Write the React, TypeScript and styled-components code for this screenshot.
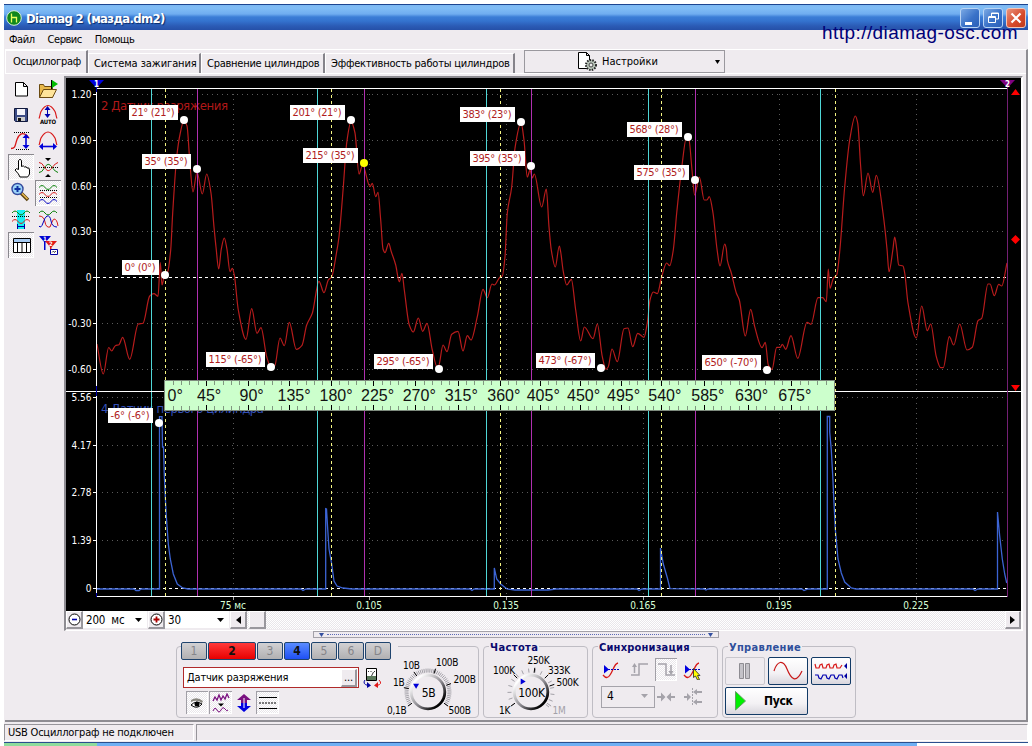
import React from 'react';
import styled, { createGlobalStyle, css } from 'styled-components';

const GlobalStyle = createGlobalStyle`
  * { box-sizing: border-box; }
  body {
    margin: 0;
    background: #fff;
    font-family: 'DejaVu Sans Condensed', 'DejaVu Sans', sans-serif;
    font-size: 11px;
    color: #000;
    overflow: hidden;
  }
  svg { display: block; flex: none; }
`;

const face = '#efebef';
const hatch = css`
  background: repeating-conic-gradient(#fff 0 25%, #e9e6ea 0 50%) 0 0 / 2px 2px;
`;

const Desktop = styled.div`
  width: 1032px;
  height: 746px;
  padding: 4px 4px 0;
`;
const Window = styled.div`
  position: relative;
  width: 1024px;
  height: 738px;
  display: flex;
  flex-direction: column;
  background: ${face};
`;
const TitleBar = styled.div`
  height: 26px;
  display: flex;
  align-items: center;
  padding: 0 2px;
  border-top: 1px solid #1d4590;
  background: linear-gradient(#7db8f2 0, #81bdf5 3px, #6fadf0 9px, #3b7dd6 12px, #3473cf 16px, #2b5bb5 21px, #2550a8 25px);
`;
const Title = styled.div`
  flex: 1;
  margin-left: 4px;
  padding-top: 1px;
  color: #fff;
  font-size: 13px;
  font-weight: bold;
  letter-spacing: -0.65px;
  text-shadow: 1px 1px 1px #0a2a6a;
`;
const WinButton = styled.div<{ $close?: boolean }>`
  width: 20px;
  height: 20px;
  margin-left: 3px;
  border: 1px solid ${p => (p.$close ? '#f3c5b8' : '#b9d4f4')};
  border-radius: 3px;
  background: ${p => (p.$close ? 'linear-gradient(135deg, #e9937c, #d6492a 60%, #c03b1c)' : 'linear-gradient(135deg, #7aa9e4, #3a72c8 55%, #2b5fb8)')};
`;
const Watermark = styled.div`
  position: absolute;
  right: 10px;
  top: 18px;
  font: 19px/22px 'Liberation Sans', Arial, sans-serif;
  letter-spacing: 0.43px;
  color: #000078;
  white-space: nowrap;
`;
const MenuBar = styled.div`
  height: 19px;
  display: flex;
  align-items: center;
  gap: 13px;
  padding-left: 5px;
  span { letter-spacing: -0.45px; }
`;
const Page = styled.div`
  height: 673px;
  margin-left: 1px;
  border-top: 1px solid #fff;
  border-right: 2px solid #8e8c92;
  border-bottom: 2px solid #8e8c92;
`;
const TabRow = styled.div`
  height: 24px;
  display: flex;
  align-items: flex-end;
  border-bottom: 1px solid #fff;
`;
const Tab = styled.div<{ $width: number; $track: number; $active?: boolean }>`
  width: ${p => p.$width}px;
  height: ${p => (p.$active ? 23 : 20)}px;
  padding-left: ${p => (p.$active ? 7 : 5)}px;
  line-height: ${p => (p.$active ? 21 : 20)}px;
  white-space: nowrap;
  border-top: 1px solid #fff;
  border-left: 1px solid #fff;
  border-right: 2px solid #85838a;
  letter-spacing: ${p => p.$track}px;
`;
const SettingsButton = styled.div`
  width: 201px;
  height: 23px;
  margin-left: 9px;
  display: flex;
  align-items: center;
  border: 1px solid #9a989e;
  padding: 0 4px 0 52px;
  span { flex: 1; margin-left: 4px; }
`;
const Body = styled.div`
  display: flex;
  height: 557px;
  padding-top: 1px;
`;
const ToolBox = styled.div`
  display: grid;
  grid-template-columns: 27px 26px;
  grid-auto-rows: 26px;
  align-content: start;
  width: 59px;
  padding: 1px 0 0 3px;
`;
const Tool = styled.div<{ $on?: boolean }>`
  width: 26px;
  height: 26px;
  ${p => p.$on && css`
    ${hatch}
    box-shadow: inset 1px 1px 0 #8a888e, inset -1px -1px 0 #fff;
  `}
`;
const Scope = styled.div`
  width: 959px;
  height: 555px;
  margin-top: 1px;
  border: 2px solid #8e8c92;
  border-right-color: #fff;
  border-bottom: 1px solid #fff;
`;
const ScopeBar = styled.div`
  display: flex;
  height: 18px;
  background: ${face};
`;
const Raised = styled.div<{ $w: number }>`
  width: ${p => p.$w}px;
  height: 18px;
  display: flex;
  align-items: center;
  justify-content: center;
  background: ${face};
  border: 1px solid #fff;
  border-right: 2px solid #99979d;
  border-bottom: 2px solid #99979d;
`;
const Combo = styled.div<{ $w: number }>`
  width: ${p => p.$w}px;
  height: 17px;
  display: flex;
  align-items: center;
  justify-content: space-between;
  padding: 1px 5px 0 3px;
  margin-right: 1px;
  font-size: 11.5px;
  letter-spacing: -0.2px;
  background: #fff;
`;
const Track = styled.div<{ $w?: number }>`
  flex: ${p => (p.$w ? `0 0 ${p.$w}px` : 1)};
  ${hatch}
`;
const Splitter = styled.div`
  width: 406px;
  height: 7px;
  margin-left: 308px;
  border: 1px solid #a3a1a8;
  padding: 0 5px;
  display: flex;
  align-items: center;
  gap: 3px;
  i { flex: 1; border-top: 1px dotted #5b6bb5; }
`;
const Panels = styled.div`
  display: flex;
  gap: 4px;
  padding: 8px 0 0 171px;
`;
const Group = styled.div<{ $w: number }>`
  position: relative;
  width: ${p => p.$w}px;
  height: 72px;
  border: 1px solid #bfbdc4;
  border-radius: 4px;
`;
const Legend = styled.div<{ $color?: string; $track?: number }>`
  position: absolute;
  left: 5px;
  top: -6px;
  padding: 0 1px;
  line-height: 14px;
  font-weight: bold;
  background: ${face};
  color: ${p => p.$color || '#0a0a6e'};
  letter-spacing: ${p => p.$track || 0}px;
  white-space: nowrap;
`;
const ChannelGroup = styled(Group)`
  display: flex;
`;
const Channels = styled.div`
  display: flex;
  gap: 1px;
  width: 217px;
  margin: -5px 0 0 -2px;
  background: ${face};
`;
const Channel = styled.div<{ $bg?: string; $wide?: boolean }>`
  width: ${p => (p.$wide ? 48 : 26)}px;
  height: 18px;
  line-height: 16px;
  text-align: center;
  font-size: 12px;
  font-weight: ${p => (p.$bg ? 'bold' : 'normal')};
  color: ${p => (p.$bg ? '#111' : '#85858a')};
  border: 1px solid #1f446e;
  border-radius: 2px;
  background: ${p => p.$bg || 'linear-gradient(#d2d1d3, #b1b0b2)'};
`;
const ChannelLeft = styled.div`
  width: 206px;
  padding-left: 6px;
`;
const NameRow = styled.div`
  display: flex;
  gap: 4px;
  margin-top: 7px;
`;
const NameField = styled.div`
  width: 176px;
  height: 21px;
  display: flex;
  align-items: center;
  justify-content: space-between;
  padding: 1px 1px 1px 3px;
  border: 1px solid #b02a2a;
  background: #fff;
  letter-spacing: -0.2px;
`;
const ToolRow = styled.div`
  display: flex;
  gap: 1px;
  margin: 3px 0 0 3px;
`;
const Flat = styled.div<{ $on?: boolean; $w?: number }>`
  width: ${p => p.$w || 22}px;
  height: 23px;
  display: flex;
  align-items: center;
  justify-content: center;
  ${p => p.$on && css`
    ${hatch}
    box-shadow: inset 1px 1px 0 #a19fa6, inset -1px -1px 0 #fff;
  `}
`;
const SyncGrid = styled.div`
  display: grid;
  grid-template-columns: repeat(4, 27px);
  grid-template-rows: 25px 29px;
  padding: 10px 0 0 8px;
  align-items: center;
`;
const SyncCombo = styled.div`
  grid-column: span 2;
  width: 54px;
  height: 22px;
  display: flex;
  align-items: center;
  justify-content: space-between;
  padding: 0 6px 2px 5px;
  border: 1px solid #a5a3aa;
  font-size: 12px;
`;
const RunGrid = styled.div`
  display: grid;
  grid-template-columns: 40px 40px 40px;
  grid-template-rows: 28px 28px;
  gap: 2px 3px;
  padding: 10px 0 0 2px;
`;
const RunButton = styled.div<{ $off?: boolean; $wide?: boolean }>`
  grid-column: span ${p => (p.$wide ? 2 : 1)};
  display: flex;
  align-items: center;
  justify-content: ${p => (p.$wide ? 'flex-start' : 'center')};
  gap: 18px;
  padding-left: ${p => (p.$wide ? 9 : 0)}px;
  border: 1px solid ${p => (p.$off ? '#c9c7cd' : '#123a66')};
  border-radius: 2px;
  background: ${p => (p.$off ? face : 'linear-gradient(#fff, #f3f1f4 60%, #d9d6dd)')};
  font-size: 12px;
  font-weight: bold;
  letter-spacing: -0.3px;
`;
const StatusBar = styled.div`
  display: flex;
  gap: 2px;
  height: 20px;
  padding: 2px 0 1px;
`;
const StatusCell = styled.div<{ $w?: number }>`
  ${p => (p.$w ? `width: ${p.$w}px;` : 'flex: 1;')}
  height: 17px;
  line-height: 16px;
  letter-spacing: -0.22px;
  padding-left: 3px;
  border-top: 1px solid #96949a;
  border-left: 1px solid #96949a;
  border-right: 1px solid #fff;
  border-bottom: 1px solid #fff;
`;
const TaskStrip = styled.div`
  display: flex;
  height: 4px;
  border-top: 1px solid #2a4f8e;
`;
const TaskPart = styled.div<{ $w: number; $bg: string }>`
  width: ${p => p.$w}px;
  background: ${p => p.$bg};
`;

type Pt = [number, number];

const vacuum: Pt[] = [
  [97, 344], [103.3, 374], [108.7, 347.5], [111.7, 351], [115.3, 345.7], [119, 344.7], [122.7, 337.3], [129.7, 359.3],
  [138.3, 324], [143, 323.3], [149.7, 296], [154, 293.7], [158, 296.3], [160.3, 262.7], [162, 285], [164.5, 275],
  [167.7, 271.7], [170.7, 250], [172.7, 213], [176.7, 157], [180.3, 133], [183.7, 121], [187, 126], [189.7, 160],
  [193, 192], [197, 172], [202.3, 194], [206.7, 174], [211, 193], [214, 227], [216, 247], [218.7, 269], [221.3, 249],
  [224.3, 238], [227, 249.5], [230, 271.7], [232.3, 268.3], [234.3, 275], [238.3, 310], [246, 339.3], [251.7, 308.7],
  [257, 333.3], [261, 327.7], [266.7, 356.7], [271, 367], [274.7, 366], [280, 338], [284.3, 345.7], [289.3, 322.3],
  [296.3, 349.3], [302, 345.3], [306.7, 325], [312.3, 313.3], [319, 281.3], [324, 292.7], [328.3, 280], [331.7, 276.7],
  [336.7, 251.7], [339, 236.7], [343.3, 187], [346.7, 143], [351, 121.7], [355, 133], [359, 174], [362.7, 165],
  [370, 186.7], [372.3, 183.3], [375.7, 196.7], [378, 192.3], [380.7, 220], [383, 249], [385, 252.7], [388.7, 243.3],
  [391.3, 251.7], [395.7, 265], [399.3, 281.7], [402, 273.3], [404.3, 290], [409.3, 325], [413.3, 332], [418.3, 318],
  [422.7, 331.3], [427, 323.3], [432.3, 350], [437.3, 367.3], [439, 365], [443, 345], [447, 351.7], [451.7, 334.3],
  [458, 331.3], [463, 351], [467.3, 335.7], [471, 340], [477.3, 316.7], [483, 289.3], [487.3, 297.7], [492, 284],
  [494.3, 285], [500.3, 276.7], [502.3, 276], [505, 256.7], [507.3, 213], [511.7, 187], [515, 148], [521, 122.7],
  [524, 140], [527.3, 177], [530, 170], [532.3, 178], [534.3, 174], [541.7, 207], [546.3, 189], [549, 227],
  [551.3, 250], [555.3, 267], [559.3, 246], [560.7, 252], [563.3, 271.7], [566.7, 285], [571.3, 279.3], [575.7, 310],
  [580.7, 341], [584.3, 327], [593, 338.7], [597.3, 324], [602.3, 356.7], [606, 369.3], [608.3, 366.7], [612, 349],
  [617.3, 361.7], [624, 328.7], [628, 328], [632.7, 346.7], [637.7, 333.3], [644, 337.3], [647.3, 323], [650, 300],
  [653.3, 292], [657.3, 293.7], [661.7, 276.7], [666.7, 263], [669.7, 265.7], [673.3, 250], [676.7, 213], [682.3, 163],
  [686.3, 138], [689, 140], [692, 170], [694.7, 195], [699.3, 177], [704.3, 200], [707, 200], [709.3, 196.7],
  [713, 213], [717, 249], [720, 266], [724.7, 244], [726.3, 249], [727.3, 260], [731.3, 273], [736.3, 293],
  [739.3, 300], [745.3, 336], [750.7, 309.3], [754.7, 326.7], [762, 347.7], [765.3, 342.3], [768.3, 365], [772, 369.3],
  [776.7, 347.3], [780.3, 347.3], [782.3, 344.3], [785.7, 349.3], [791, 335.7], [797.7, 358.3], [807, 322.3],
  [811, 324.3], [818, 297.7], [822.7, 297.7], [826.3, 301.7], [828.3, 269], [830, 288.3], [833.3, 278.3], [836.7, 275],
  [839.7, 251.7], [844.7, 187], [849.7, 140], [855.3, 116], [857.7, 123], [860.7, 167], [863.3, 195.7], [868, 173],
  [872.7, 192.3], [876.3, 175.3], [883, 213], [887, 249], [889, 271.7], [892.7, 251], [894.7, 237], [896.7, 249],
  [898.7, 265], [903, 266], [904.7, 273], [908, 303], [916.3, 338], [921.7, 306], [927.3, 330.7], [930.7, 324],
  [936.3, 356.7], [940.7, 367.7], [943.3, 367.7], [949.3, 336.7], [953.7, 345], [959.7, 324], [967, 350],
  [972.3, 347.3], [978, 320.7], [981.7, 318.3], [988, 284], [990, 284], [994.3, 295.7], [998.7, 284.3], [1001.7, 286],
  [1007, 263],
];

const firstCylinder: Pt[] = [
  [97, 589], [134, 589], [136, 590.5], [139, 590.5], [141, 589], [159.5, 589], [159.5, 416.7], [162, 416.7],
  [162.5, 447], [163.5, 447], [164.3, 475], [165.3, 497], [166.3, 516], [168.3, 544], [170.3, 559], [173.3, 574],
  [177.3, 584], [182.7, 588], [188, 589], [206, 589], [301, 589], [303, 590.5], [306, 589], [325.7, 589],
  [325.7, 508.7], [326.5, 509], [327.7, 529], [329, 549], [331.7, 564], [334, 581], [337, 586], [343, 588], [352, 589],
  [470, 589], [472, 590.5], [474, 589], [494.3, 589], [494.3, 568], [496.7, 579], [500.7, 584], [507, 589],
  [515, 590], [548, 590], [556, 589], [637, 589], [639, 590.5], [642, 589], [660.5, 589], [660.5, 548], [661.5, 554],
  [663.3, 564], [667.3, 577.7], [670, 588.7], [704, 589], [706, 590], [708, 589], [802, 589], [804, 590.5], [808, 589],
  [827.3, 589], [827.3, 416.5], [829.7, 416.5], [829.7, 432], [831.3, 450], [832.7, 475], [833.7, 497], [835.3, 529],
  [838, 559], [841.3, 573], [844.7, 582], [851.3, 588], [856, 589], [973, 589], [975, 590.5], [978, 589], [997.5, 589],
  [997.5, 512], [999.7, 536], [1002.3, 559], [1004.7, 574], [1006.7, 583],
];

const poly = (pts: Pt[]) => pts.map(p => p.join(',')).join(' ');

// monotone cubic, so the extremes stay where the samples are
const smooth = (pts: Pt[]) => {
  const n = pts.length;
  const s = pts.slice(1).map((p, i) => (p[1] - pts[i][1]) / (p[0] - pts[i][0]));
  const m = pts.map((_, i) => {
    if (i === 0) return s[0];
    if (i === n - 1) return s[n - 2];
    return s[i - 1] * s[i] <= 0 ? 0 : (2 * s[i - 1] * s[i]) / (s[i - 1] + s[i]);
  });
  let d = `M${pts[0][0]} ${pts[0][1]}`;
  for (let i = 0; i < n - 1; i++) {
    const h = (pts[i + 1][0] - pts[i][0]) / 3;
    d += `C${(pts[i][0] + h).toFixed(1)} ${(pts[i][1] + m[i] * h).toFixed(1)} ${(pts[i + 1][0] - h).toFixed(1)} ${(pts[i + 1][1] - m[i + 1] * h).toFixed(1)} ${pts[i + 1][0]} ${pts[i + 1][1]}`;
  }
  return d;
};

const yLabels: [string, number][] = [
  ['1.20', 94], ['0.90', 140], ['0.60', 186], ['0.30', 231], ['0', 277], ['-0.30', 323], ['-0.60', 369],
  ['5.56', 397], ['4.17', 445], ['2.78', 492], ['1.39', 540], ['0', 588],
];
const xLabels: [string, number][] = [
  ['75 мс', 233], ['0.105', 369], ['0.135', 506], ['0.165', 643], ['0.195', 779], ['0.225', 916],
];
const marks: { text: string; x: number; y: number; w: number; hot?: boolean }[] = [
  { text: '21° (21°)', x: 184, y: 120, w: 49 },
  { text: '35° (35°)', x: 197, y: 169, w: 49 },
  { text: '201° (21°)', x: 351, y: 120, w: 55 },
  { text: '215° (35°)', x: 364, y: 163, w: 55, hot: true },
  { text: '383° (23°)', x: 521, y: 122, w: 55 },
  { text: '395° (35°)', x: 531, y: 166, w: 55 },
  { text: '568° (28°)', x: 688, y: 137, w: 55 },
  { text: '575° (35°)', x: 695, y: 180, w: 55 },
  { text: '0° (0°)', x: 165, y: 275, w: 37 },
  { text: '115° (-65°)', x: 271, y: 367, w: 59 },
  { text: '295° (-65°)', x: 439, y: 369, w: 59 },
  { text: '473° (-67°)', x: 601, y: 368, w: 59 },
  { text: '650° (-70°)', x: 767, y: 370, w: 59 },
  { text: '-6° (-6°)', x: 159, y: 423, w: 45 },
];
const strokes = [164.7, 331.3, 500.3, 661.3, 834.7];
const rulerLabels: [string, number][] = [
  ['0°', 167.5], ['45°', 197], ['90°', 239.5], ['135°', 277.5], ['180°', 319.5], ['225°', 361], ['270°', 402.7],
  ['315°', 444.7], ['360°', 487.3], ['405°', 526.7], ['450°', 567], ['495°', 607], ['540°', 648.3], ['585°', 691.3],
  ['630°', 735], ['675°', 778.3],
];

const Ruler = () => {
  const ticks: React.ReactNode[] = [];
  strokes.slice(0, 4).forEach((x0, s) => {
    const step = (strokes[s + 1] - x0) / 20;
    for (let i = 0; i < 20; i++) {
      if (s === 0 && i === 0) continue;
      const x = Math.floor(x0 + step * i) + 0.5;
      const major = i % 5 === 0;
      const len = major ? 5 : 4;
      ticks.push(
        <path key={`${s}-${i}`} d={`M${x} 381v${len}M${x} 410v-${len}`} stroke={major ? '#000' : '#7f977f'} />
      );
    }
  });
  return (
    <g>
      <rect x="164.5" y="380.5" width="670" height="30" fill="#ccffcc" stroke="#7d8a7d" />
      {ticks}
      {rulerLabels.map(([t, x]) => (
        <text key={t} x={x} y="400.5" fontSize="16" fontFamily="Liberation Sans" fill="#111">{t}</text>
      ))}
    </g>
  );
};

const Chart = () => (
  <svg width="955" height="533" viewBox="66 78 955 533" fontSize="10">
    <rect x="66" y="78" width="955" height="533" fill="#000" />
    <g stroke="#5a5a5a" strokeDasharray="1 4" fill="none">
      {yLabels.filter(l => l[0] !== '0').map(([t, y]) => <path key={t} d={`M102 ${y + 0.5}H1004`} />)}
      {xLabels.map(([t, x]) => <path key={t} d={`M${x + 0.5} 94V390M${x + 0.5} 398V596`} />)}
    </g>
    <text x="101" y="110" fontSize="13" fill="#b01818" textLength="127">2 Датчик разряжения</text>
    <text x="101" y="413" fontSize="13" fill="#3450b8" textLength="163">4 Датчик первого цилиндра</text>
    <path d="M97 277.5H1007M97 588.5H1007" stroke="#fff" strokeDasharray="3 3" />
    <path d={smooth(vacuum)} fill="none" stroke="#b81c1c" strokeWidth="1.2" />
    <polyline points={poly(firstCylinder)} fill="none" stroke="#3c64d4" strokeWidth="1.3" />
    <path d="M151.5 89V596M317.5 89V596M486.5 89V596M648.5 89V596M820.5 89V596" stroke="#4fd6d6" />
    <path d="M165.5 89V596M331.5 89V596M500.5 89V596M661.5 89V596M835.5 89V596" stroke="#f4f482" strokeDasharray="3 3" />
    <path d="M197.5 89V596M364.5 89V596M531.5 89V596M695.5 89V596" stroke="#b030b0" />
    <path d="M96.5 84V597M96 88.5H1008M66 391.5H1021M96 596.5H1008" stroke="#fff" />
    <path d="M96.5 84v8M96.5 386v10M96.5 593v4" stroke="#0000a8" />
    <path d="M1007.5 84V597" stroke="#742074" />
    {yLabels.map(([t, y], i) => (
      <g key={i}>
        <path d={`M93 ${y + 0.5}h4`} stroke="#fff" />
        <text x="91.5" y={y + 3.5} textAnchor="end" fill="#fff">{t}</text>
      </g>
    ))}
    {xLabels.map(([t, x]) => (
      <g key={t}>
        <path d={`M${x + 0.5} 597v3`} stroke="#aaa" />
        <text x={x} y="609" textAnchor="middle" fill="#d8ffd8">{t}</text>
      </g>
    ))}
    <path d="M89 80h15l-7.5 8z" fill="#0000e0" />
    <text x="96.5" y="87" fontSize="8" fontWeight="bold" textAnchor="middle" fill="#fff">1</text>
    <path d="M1000 80h15l-7.5 8z" fill="#800080" />
    <text x="1007.5" y="87" fontSize="8" fontWeight="bold" textAnchor="middle" fill="#fff">2</text>
    <path d="M1011 95h9l-4.5-6zM1011 385h9l-4.5 6zM1015.5 235l4.5 4.5-4.5 4.5-4.5-4.5z" fill="#f00" />
    {marks.map(m => (
      <g key={m.text}>
        <rect x={m.x - 6 - m.w} y={m.y - 15} width={m.w} height="15" fill="#fff" />
        <text x={m.x - 3.5 - m.w} y={m.y - 4} fontSize="11" fill="#b01c1c" textLength={m.w - 6}>{m.text}</text>
        <circle cx={m.x} cy={m.y} r="4" fill={m.hot ? '#ff0' : '#fff'} />
      </g>
    ))}
    <Ruler />
  </svg>
);

const wave = (y: number, a: number) => `M4 ${y + a}q3-${a * 2.6} 6 0t6 0t6 0`;
const dots = { stroke: '#000', strokeDasharray: '1 1' };

const tools: { on?: boolean; art: React.ReactNode }[] = [
  { art: <path d="M7.5 6.5h8l4 4v9.5h-12zM15.5 6.5v4h4" fill="#fff" stroke="#000" /> },
  {
    art: (
      <>
        <path d="M4.5 21.5v-13h4l1 2h8v11z" fill="#e8b84a" stroke="#6b4a10" />
        <path d="M4.5 21.5l4-8h13l-4 8z" fill="#ffe49a" stroke="#6b4a10" />
        <path d="M16.5 4v9" stroke="#000" />
        <path d="M17 4l6 4-6 4z" fill="#0b0" />
      </>
    ),
  },
  {
    art: (
      <>
        <path d="M6.5 6.5h13v13h-12l-1-1z" fill="#3c4c86" stroke="#10183c" />
        <path d="M9 7h8v6h-8z" fill="#f4f4fa" />
        <path d="M9 15h8v4h-8z" fill="#ccc" />
        <path d="M10 16h3v3h-3z" fill="#111" />
      </>
    ),
  },
  {
    art: (
      <>
        <path d="M4 16.5c1-2 1-5 2-7q7-12 14 0c1 2 1 5 2 7" fill="none" stroke="#d81818" strokeWidth="1.2" />
        <path d="M12.5 6v8" stroke="#0000b0" />
        <path d="M9.5 8l3-4 3 4zM9.5 12l3 4 3-4z" fill="#0000b0" />
        <text x="13" y="22" fontSize="6" fontWeight="bold" textAnchor="middle" textLength="16">AUTO</text>
      </>
    ),
  },
  {
    art: (
      <>
        <path d="M6 4.5h16M8 21.5h14" {...dots} />
        <path d="M3 20.5c5 0 4-4 6-9s5-8 10-4l2 3" fill="none" stroke="#d81818" strokeWidth="1.3" />
        <path d="M18 8v11" stroke="#0000d8" strokeWidth="1.6" />
        <path d="M14.5 10l3.5-4 3.5 4zM14.5 17l3.5 4 3.5-4z" fill="#0000d8" />
      </>
    ),
  },
  {
    art: (
      <>
        <path d="M4 17c1-2 1-5 2-7q7-12 14 0c1 2 1 5 2 7" fill="none" stroke="#d81818" strokeWidth="1.2" />
        <path d="M7 18.5h13" stroke="#0000d8" strokeWidth="1.6" />
        <path d="M8 15v7l-4-3.5zM18 15v7l4-3.5z" fill="#0000d8" />
      </>
    ),
  },
  {
    on: true,
    art: (
      <path
        d="M10.5 15.5v-9q1.5-2.5 3 0v6q2-1.5 3 .5 2-1 2.5 1 2.5-1 2.5 2v4q-1 2-2 3h-7.5q-1-3-5-7 1-2.500 3.500-.5z"
        fill="#fff"
        stroke="#000"
      />
    ),
  },
  {
    art: (
      <>
        <path d="M4 13.5h19" {...dots} />
        <path d="M4 8.5q3 0 5 4c3 5 5 6 9 0q2-3 5-4" fill="none" stroke="#088008" transform="matrix(1 0 0 -1 0 27)" />
        <path d="M4 8.500q3 0 5 4c3 5 5 6 9 0q2-3 5-4" fill="none" stroke="#d81818" />
        <path d="M10 4h6l-3 3zM10 23h6l-3-3z" />
      </>
    ),
  },
  {
    art: (
      <>
        <path d="M13 13l7 7" stroke="#5a4210" strokeWidth="3.6" />
        <path d="M13.5 13l6 6" stroke="#e8b850" strokeWidth="1.6" />
        <circle cx="9.5" cy="9" r="5.5" fill="#9cd4f8" stroke="#34489c" strokeWidth="1.4" />
        <path d="M6.5 9h6M9.5 6v6" stroke="#1030a0" strokeWidth="2" />
      </>
    ),
  },
  {
    on: true,
    art: (
      <>
        <path d={wave(6, 1.5)} fill="none" stroke="#088008" />
        <path d={wave(13, 1.5)} fill="none" stroke="#d81818" />
        <path d={wave(20, 1.5)} fill="none" stroke="#0000c0" />
        <path d="M5 10.5h18M5 17.5h18" {...dots} />
      </>
    ),
  },
  {
    art: (
      <>
        <path d="M9 4h8v19h-8z" fill="#18f0f0" />
        <path d={wave(5.5, 1.5)} fill="none" stroke="#088008" />
        <path d="M4 10.5h18" {...dots} />
        <path d={wave(14, 1.5)} fill="none" stroke="#d81818" />
        <path d="M9.5 18v5M16.5 18v5M10 20.5h6" stroke="#0000a0" />
      </>
    ),
  },
  {
    art: (
      <>
        <path d={wave(5.5, 1.5)} fill="none" stroke="#088008" />
        <path d="M4 10q5 0 6 6t5 5q3-8 4-8 3 0 4 7" fill="none" stroke="#d81818" />
        <path d="M4 20q2 3 4-3t4-7q3-1 4 5t6 6" fill="none" stroke="#0000c0" />
      </>
    ),
  },
  {
    on: true,
    art: (
      <>
        <path d="M5.5 6.5h17v14h-17z" fill="#fff" stroke="#000" />
        <path d="M6 7h16v3h-16z" fill="#a8ccf4" />
        <path d="M5.5 10.5h17M9.5 10v10M14 10v10M18.5 10v10" stroke="#000" />
      </>
    ),
  },
  {
    art: (
      <>
        <path d="M4 4h12l-6 7zM9 9h1.500v9h-1.500z" fill="#0000d0" />
        <path d="M10 9h12l-6 7zM15 14h1.500v7h-1.500z" fill="#e01818" />
        <text x="10" y="9" fontSize="6" fontWeight="bold" textAnchor="middle" fill="#fff">1</text>
        <text x="16" y="14" fontSize="6" fontWeight="bold" textAnchor="middle" fill="#fff">2</text>
        <path d="M15.5 17.5h7v5h-7z" fill="#fff" stroke="#0000a0" />
        <path d="M17 20.5l1.5-1.5 1 1.5 1.5-1.5" stroke="#000" fill="none" strokeWidth=".7" />
      </>
    ),
  },
];

const Caret = ({ color = '#000', w = 7 }: { color?: string; w?: number }) => (
  <svg width={w} height="4"><path d={`M0 0h${w}l-${w / 2} 4z`} fill={color} /></svg>
);

type KnobLabel = { text: string; x: number; y: number; angle: number; off?: boolean };

const KnobSvg = styled.svg`
  margin-top: 7px;
  letter-spacing: -0.3px;
`;

const Knob = ({ value, labels, pointer, ring, cx, w }: {
  value: string; labels: KnobLabel[]; pointer: number; ring: number; cx: number; w: number;
}) => {
  const at = (deg: number, r: number) => {
    const a = (deg * Math.PI) / 180;
    return `${(cx + r * Math.sin(a)).toFixed(1)} ${(38 - r * Math.cos(a)).toFixed(1)}`;
  };
  const n = Math.round(250 / ring);
  return (
    <KnobSvg width={w} height="63" fontSize="10">
      <defs>
        <linearGradient id={`edge${w}`} x1="0" y1="0" x2="1" y2="1">
          <stop offset="0.15" stopColor="#fff" />
          <stop offset="0.55" stopColor="#88868c" />
          <stop offset="0.85" stopColor="#000" />
        </linearGradient>
      </defs>
      {Array.from({ length: n + 1 }, (_, i) => -125 + i * ring).map(a => (
        <path key={a} d={`M${at(a, 19.5)}L${at(a, 23.5)}`} stroke="#a3a1a8" />
      ))}
      {labels.map(l => (
        <g key={l.text}>
          <path d={`M${at(l.angle, 19.5)}L${at(l.angle, 24.5)}`} stroke={l.off ? '#a3a1a8' : '#000'} />
          <text x={l.x} y={l.y} fill={l.off ? '#a3a1a8' : '#000'}>{l.text}</text>
        </g>
      ))}
      <circle cx={cx} cy="38" r="16.8" fill={face} stroke={`url(#edge${w})`} strokeWidth="2.8" />
      <path d="M-3-2h6l-3 5z" fill="#0000d8" transform={`translate(${at(pointer, 13.5)}) rotate(${pointer < -50 ? 0 : -90})`} />
      <text x={cx + 0.5} y="42.5" textAnchor="middle" fontSize="12">{value}</text>
    </KnobSvg>
  );
};

const voltLabels: KnobLabel[] = [
  { text: '0,1В', x: 4, y: 60, angle: -125 },
  { text: '1В', x: 10, y: 32, angle: -80 },
  { text: '10В', x: 20, y: 15, angle: -35 },
  { text: '100В', x: 53, y: 12, angle: 18 },
  { text: '200В', x: 70.5, y: 29, angle: 70 },
  { text: '500В', x: 65.5, y: 60, angle: 125 },
];
const rateLabels: KnobLabel[] = [
  { text: '1K', x: 15, y: 60, angle: -125 },
  { text: '100K', x: 9, y: 20, angle: -45 },
  { text: '250K', x: 43.5, y: 10, angle: 9 },
  { text: '333K', x: 64, y: 20, angle: 45 },
  { text: '500K', x: 72.5, y: 32, angle: 72 },
  { text: '1M', x: 68.5, y: 60, angle: 125, off: true },
];

const SyncWave = ({ cursor }: { cursor?: boolean }) => (
  <svg width="20" height="20">
    <path d="M1 15q4 5 7 0c4-6 4-11 8-12" fill="none" stroke="#d81818" strokeWidth="1.3" />
    <path d="M3 9.5h14" stroke="#0000c0" strokeDasharray="2 1" />
    <path d="M2 5l5 4.5-5 4z" fill="#0000e0" />
    {cursor && <path d="M10.5 8.5l6.5 7h-2.5l2 4-2 .5-2-4-2 1.5z" fill="#ff0" stroke="#222" strokeWidth=".8" />}
  </svg>
);

const App = () => (
  <Desktop>
    <GlobalStyle />
    <Window>
      <TitleBar>
        <svg width="16" height="16">
          <circle cx="8" cy="8" r="7.3" fill="#10881c" stroke="#d8f0d8" />
          <path d="M5.5 3.5v9M5.5 7.5h5v5" fill="none" stroke="#eaff60" strokeWidth="1.3" />
        </svg>
        <Title>Diamag 2 (мазда.dm2)</Title>
        <WinButton>
          <svg width="18" height="18"><path d="M4 13h7v3h-7z" fill="#fff" /></svg>
        </WinButton>
        <WinButton>
          <svg width="18" height="18" fill="none" stroke="#fff">
            <path d="M7.5 7v-3h7v6h-3M7 4.5h8" />
            <path d="M4.5 8v5.5h7v-6h-7M4 8.5h8" />
          </svg>
        </WinButton>
        <WinButton $close>
          <svg width="18" height="18"><path d="M4.5 4.5l9 9M13.5 4.5l-9 9" stroke="#fff" strokeWidth="2.2" /></svg>
        </WinButton>
      </TitleBar>
      <MenuBar><span>Файл</span><span>Сервис</span><span>Помощь</span></MenuBar>
      <Watermark>http://diamag-osc.com</Watermark>
      <Page>
        <TabRow>
          <Tab $width={83} $track={-0.3} $active>Осциллограф</Tab>
          <Tab $width={113} $track={-0.08}>Система зажигания</Tab>
          <Tab $width={124} $track={-0.25}>Сравнение цилиндров</Tab>
          <Tab $width={190} $track={-0.22}>Эффективность работы цилиндров</Tab>
          <SettingsButton>
            <svg width="21" height="21">
              <path d="M1.5 1.5h8l3 3v13h-11zM9.5 1.5v3h3" fill="#fff" stroke="#000" />
              <circle cx="14" cy="14" r="5" fill="#b8c4b8" stroke="#222" strokeWidth="2" strokeDasharray="1.5 1.2" />
              <circle cx="14" cy="14" r="2" fill="#eee" stroke="#444" />
            </svg>
            <span>Настройки</span>
            <Caret w={5} />
          </SettingsButton>
        </TabRow>
        <Body>
          <ToolBox>
            {tools.map((t, i) => (
              <Tool key={i} $on={t.on}><svg width="26" height="26">{t.art}</svg></Tool>
            ))}
          </ToolBox>
          <Scope>
            <Chart />
            <ScopeBar>
              <Raised $w={17}>
                <svg width="13" height="13"><circle cx="6.5" cy="6.5" r="5.5" fill="#fff" stroke="#000" /><path d="M4 6.5h5" stroke="#00a" strokeWidth="1.6" /></svg>
              </Raised>
              <Combo $w={64}><span>200&nbsp; мс</span><Caret /></Combo>
              <Raised $w={17}>
                <svg width="13" height="13"><circle cx="6.5" cy="6.5" r="5.5" fill="#fff" stroke="#000" /><path d="M3.5 6.5h6M6.5 3.5v6" stroke="#a00" strokeWidth="1.8" /></svg>
              </Raised>
              <Combo $w={64}><span>30</span><Caret /></Combo>
              <Raised $w={17}><svg width="5" height="8"><path d="M5 0v8l-5-4z" /></svg></Raised>
              <Track $w={2} />
              <Raised $w={17} />
              <Track />
              <Raised $w={16}><svg width="5" height="8"><path d="M0 0v8l5-4z" /></svg></Raised>
            </ScopeBar>
          </Scope>
        </Body>
        <Splitter><Caret color="#3450a0" w={5} /><i /><Caret color="#3450a0" w={5} /></Splitter>
        <Panels>
          <ChannelGroup $w={303}>
            <ChannelLeft>
              <Channels>
                <Channel>1</Channel>
                <Channel $wide $bg="linear-gradient(#ff3a3a, #e80000)">2</Channel>
                <Channel>3</Channel>
                <Channel $bg="linear-gradient(#5a8cff, #1f50f4)">4</Channel>
                <Channel>5</Channel>
                <Channel>6</Channel>
                <Channel>D</Channel>
              </Channels>
              <NameRow>
                <NameField><span>Датчик разряжения</span><Raised $w={16}>...</Raised></NameField>
                <svg width="19" height="21">
                  <path d="M3.5 1.5h10v12h-10z" fill="#fff" stroke="#000" />
                  <path d="M4 9h9v4h-9z" fill="#5a785a" />
                  <path d="M5 5l1-1M8 4v1M11 4l1 1M8.5 9l2-4" stroke="#000" strokeWidth=".8" />
                  <path d="M2 13q-3 4 3 5.5" fill="none" stroke="#0000a0" />
                  <path d="M4 15l4 3.5-4 2.5z" fill="#0000a0" />
                  <path d="M16 13q4 4-2 5.5" fill="none" stroke="#e01818" />
                  <path d="M15 15l-4 3.5 4 2.5z" fill="#e01818" />
                </svg>
              </NameRow>
              <ToolRow>
                <Flat $on>
                  <svg width="14" height="12"><path d="M1 3q6-4 12 1l-1 2q-5-4-11-1z" fill="#8a8880" /><path d="M1 8q5-5 11-1-5 6-11 1z" fill="#fff" stroke="#000" /><circle cx="7" cy="7" r="2.5" /></svg>
                </Flat>
                <Flat $on $w={23}>
                  <svg width="18" height="20" fill="none" stroke="#7a1080"><path d="M1 8l2-4 2 3 2-5 2 5 2-4 2 3 2-5 2 4" strokeWidth="1.3" /><path d="M1 18q2-5 4-1t4 0q2-4 4-1t3 1" /><path d="M6 10.5h6l-3 3z" fill="#000" stroke="none" /></svg>
                </Flat>
                <Flat $w={22}>
                  <svg width="14" height="18"><path d="M7 0l7 6h-4v3h-6v-3h-4z" fill="#7a1080" /><path d="M7 18l7-6h-4v-3h-6v3h-4z" fill="#0000e0" /><path d="M7 4v10" stroke="#fff" /></svg>
                </Flat>
                <Flat $on $w={23}>
                  <svg width="18" height="14" stroke="#000"><path d="M0 1.5h18M0 12.5h18" /><path d="M0 7h18" strokeDasharray="2 1" /></svg>
                </Flat>
              </ToolRow>
            </ChannelLeft>
            <Knob value="5В" labels={voltLabels} pointer={-62} ring={5} cx={45} w={94} />
          </ChannelGroup>
          <Group $w={105}>
            <Legend $track={0.4}>Частота</Legend>
            <Knob value="100K" labels={rateLabels} pointer={-38} ring={17} cx={47} w={103} />
          </Group>
          <Group $w={126}>
            <Legend $track={0.2}>Синхронизация</Legend>
            <SyncGrid>
              <Flat><SyncWave /></Flat>
              <Flat>
                <svg width="17" height="15" fill="none" stroke="#a5a3aa" strokeWidth="1.5"><path d="M0 13h8v-11h9M3.5 11v-8" /><path d="M1 5l2.5-4 2.5 4z" fill="#a5a3aa" stroke="none" /></svg>
              </Flat>
              <Flat $on>
                <svg width="17" height="15" fill="none" stroke="#a5a3aa" strokeWidth="1.5"><path d="M0 2h8v11h9M13 3v8" /><path d="M10.5 9l2.5 4 2.5-4z" fill="#a5a3aa" stroke="none" /></svg>
              </Flat>
              <Flat><SyncWave cursor /></Flat>
              <SyncCombo><span>4</span><Caret color="#a5a3aa" /></SyncCombo>
              <Flat>
                <svg width="18" height="10" fill="#a5a3aa"><path d="M0 4h4v-3.5l4.5 4.5-4.5 4.5v-3.5h-4zM18 4h-4v-3.5l-4.5 4.5 4.5 4.5v-3.5h4z" /></svg>
              </Flat>
              <Flat>
                <svg width="18" height="18" fill="#a5a3aa"><path d="M0 8h3v-3l4 4-4 4v-3h-3zM9 4l4-3v2h5v2h-5v2zM9 14l4-3v2h5v2h-5v2z" /><path d="M8.5 0v18" stroke="#a5a3aa" strokeDasharray="2 1" /></svg>
              </Flat>
            </SyncGrid>
          </Group>
          <Group $w={134}>
            <Legend $color="#30509c" $track={0.3}>Управление</Legend>
            <RunGrid>
              <RunButton $off>
                <svg width="12" height="16"><path d="M.5.5h4v15h-4zM6.5.5h4v15h-4z" fill="#c4c2c8" stroke="#8e8c92" /></svg>
              </RunButton>
              <RunButton>
                <svg width="30" height="20" fill="none"><path d="M1 10c3-10 9-12 13-2s9 15 15 2" stroke="#c81818" strokeWidth="1.2" /></svg>
              </RunButton>
              <RunButton>
                <svg width="34" height="20" fill="none" strokeWidth="1.2">
                  <path d="M1 3l1 4h3l1-3 2-1 1 4h3l1-3 2-1 1 4h3l1-3 2-1 1 4h3l2-3" stroke="#d81818" />
                  <path d="M1 14l3 0 1 3 2 1 2-4h3l1 3 2 1 2-4h3l1 3 2 1 2-4h3l1 3" stroke="#0000b0" />
                  <path d="M33 2v6l-3-3zM33 12v6l-3-3z" fill="#0000a0" />
                </svg>
              </RunButton>
              <RunButton $wide>
                <svg width="11" height="20"><path d="M.5.5l10 9.500-10 9z" fill="#00f000" stroke="#60a060" /></svg>
                <span>Пуск</span>
              </RunButton>
            </RunGrid>
          </Group>
        </Panels>
      </Page>
      <StatusBar>
        <StatusCell $w={190}>USB Осциллограф не подключен</StatusCell>
        <StatusCell />
      </StatusBar>
    </Window>
    <TaskStrip>
      <TaskPart $w={93} $bg="#8fdc9c" />
      <TaskPart $w={820} $bg="#6fb0f4" />
    </TaskStrip>
  </Desktop>
);

export default App;
